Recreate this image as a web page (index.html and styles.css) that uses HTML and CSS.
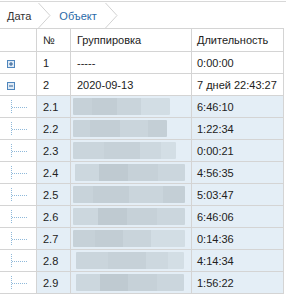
FILE: index.html
```html
<!DOCTYPE html>
<html>
<head>
<meta charset="utf-8">
<link rel="stylesheet" href="styles.css">
</head>
<body>
<div class="page">
  <div class="crumbs">
    <span class="crumb first">Дата</span>
    <svg class="chev" width="13" height="25" viewBox="0 0 13 25"><polyline points="0.5,0 12,12.5 0.5,25" fill="none" stroke="#d2d2d2" stroke-width="1"/></svg>
    <span class="crumb active">Объект</span>
    <svg class="chev" width="13" height="25" viewBox="0 0 13 25"><polyline points="0.5,0 12,12.5 0.5,25" fill="none" stroke="#d2d2d2" stroke-width="1"/></svg>
  </div>
  <div class="grid">
    <div class="row head">
      <div class="c c1"></div><div class="c c2">№</div><div class="c c3">Группировка</div><div class="c c4">Длительность</div>
    </div>
    <div class="row">
      <div class="c c1"><svg class="tog" width="8" height="8" viewBox="0 0 8 8"><rect x="0.5" y="0.5" width="7" height="7" fill="#dfeaf5" stroke="#4f86bd"/><path d="M2 4h4M4 2v4" stroke="#2d5f94" stroke-width="1"/></svg></div>
      <div class="c c2">1</div><div class="c c3">-----</div><div class="c c4">0:00:00</div>
    </div>
    <div class="row">
      <div class="c c1"><svg class="tog" width="8" height="8" viewBox="0 0 8 8"><rect x="0.5" y="0.5" width="7" height="7" fill="#dfeaf5" stroke="#4f86bd"/><path d="M2 4h4" stroke="#2d5f94" stroke-width="1"/></svg></div>
      <div class="c c2">2</div><div class="c c3">2020-09-13</div><div class="c c4">7 дней 22:43:27</div>
    </div>
    <div class="row child">
      <div class="c c1"><svg class="tree" width="30" height="21" viewBox="0 0 30 21"><path d="M11.5 4v13M12 11.5h16" stroke="#8fb9da" stroke-dasharray="1 1"/></svg></div>
      <div class="c c2">2.1</div><div class="c c3"><span class="blur w1 g1"></span></div><div class="c c4">6:46:10</div>
    </div>
    <div class="row child">
      <div class="c c1"><svg class="tree" width="30" height="21" viewBox="0 0 30 21"><path d="M11.5 4v13M12 11.5h16" stroke="#8fb9da" stroke-dasharray="1 1"/></svg></div>
      <div class="c c2">2.2</div><div class="c c3"><span class="blur w2 g2"></span></div><div class="c c4">1:22:34</div>
    </div>
    <div class="row child">
      <div class="c c1"><svg class="tree" width="30" height="21" viewBox="0 0 30 21"><path d="M11.5 4v13M12 11.5h16" stroke="#8fb9da" stroke-dasharray="1 1"/></svg></div>
      <div class="c c2">2.3</div><div class="c c3"><span class="blur w3 g3"></span></div><div class="c c4">0:00:21</div>
    </div>
    <div class="row child">
      <div class="c c1"><svg class="tree" width="30" height="21" viewBox="0 0 30 21"><path d="M11.5 4v13M12 11.5h16" stroke="#8fb9da" stroke-dasharray="1 1"/></svg></div>
      <div class="c c2">2.4</div><div class="c c3"><span class="blur w4 g4"></span></div><div class="c c4">4:56:35</div>
    </div>
    <div class="row child">
      <div class="c c1"><svg class="tree" width="30" height="21" viewBox="0 0 30 21"><path d="M11.5 4v13M12 11.5h16" stroke="#8fb9da" stroke-dasharray="1 1"/></svg></div>
      <div class="c c2">2.5</div><div class="c c3"><span class="blur w5 g2"></span></div><div class="c c4">5:03:47</div>
    </div>
    <div class="row child">
      <div class="c c1"><svg class="tree" width="30" height="21" viewBox="0 0 30 21"><path d="M11.5 4v13M12 11.5h16" stroke="#8fb9da" stroke-dasharray="1 1"/></svg></div>
      <div class="c c2">2.6</div><div class="c c3"><span class="blur w5 g4"></span></div><div class="c c4">6:46:06</div>
    </div>
    <div class="row child">
      <div class="c c1"><svg class="tree" width="30" height="21" viewBox="0 0 30 21"><path d="M11.5 4v13M12 11.5h16" stroke="#8fb9da" stroke-dasharray="1 1"/></svg></div>
      <div class="c c2">2.7</div><div class="c c3"><span class="blur w5 g1"></span></div><div class="c c4">0:14:36</div>
    </div>
    <div class="row child">
      <div class="c c1"><svg class="tree" width="30" height="21" viewBox="0 0 30 21"><path d="M11.5 4v13M12 11.5h16" stroke="#8fb9da" stroke-dasharray="1 1"/></svg></div>
      <div class="c c2">2.8</div><div class="c c3"><span class="blur w6 g3"></span></div><div class="c c4">4:14:34</div>
    </div>
    <div class="row child">
      <div class="c c1"><svg class="tree" width="30" height="21" viewBox="0 0 30 21"><path d="M11.5 4v13M12 11.5h16" stroke="#8fb9da" stroke-dasharray="1 1"/></svg></div>
      <div class="c c2">2.9</div><div class="c c3"><span class="blur w6 g4"></span></div><div class="c c4">1:56:22</div>
    </div>
  </div>
</div>
</body>
</html>
```

FILE: styles.css
```css
html, body {
  margin: 0;
  padding: 0;
  background: #ffffff;
}
body {
  font-family: "Liberation Sans", Arial, sans-serif;
  font-size: 11px;
  color: #222222;
}
.page {
  width: 286px;
  overflow: hidden;
}
.crumbs {
  margin-top: 1px;
  border-top: 1px solid #d8d8d8;
  height: 26px;
  display: flex;
  align-items: center;
}
.crumb {
  line-height: 26px;
  padding-top: 2px;
  color: #333333;
}
.crumb.first {
  padding-left: 7px;
  padding-right: 7px;
}
.crumb.active {
  color: #2a6aa8;
  padding-left: 8px;
  padding-right: 8px;
}
.chev {
  align-self: flex-end;
  display: block;
}
.grid {
  width: 284px;
  border-top: 1px solid #d4d4d4;
}
.row {
  display: grid;
  grid-template-columns: 37px 34px 121px 92px;
  height: 22px;
}
.row.head {
  height: 23px;
  background: #ffffff;
}
.c {
  box-sizing: border-box;
  border-right: 1px solid #d4d4d4;
  border-bottom: 1px solid #d4d4d4;
  padding-left: 6px;
  display: flex;
  align-items: center;
  white-space: nowrap;
  overflow: hidden;
}
.c1 {
  padding-left: 0;
}
.c4 {
  padding-left: 5px;
}
.child .c2,
.child .c3,
.child .c4 {
  background: #e4eef6;
}
.tog {
  display: block;
  margin-left: 7px;
  margin-top: 2px;
}
.tree {
  display: block;
}
.blur {
  display: block;
  height: 17px;
  margin-left: -4px;
  border-radius: 1px;
}
.w1 { width: 97px; }
.w2 { width: 94px; }
.w3 { width: 103px; }
.w4 { width: 110px; margin-left: -2px; }
.w5 { width: 112px; }
.w6 { width: 108px; margin-left: -1px; }
.g1 {
  background: linear-gradient(to right, #c6d1d8 0 20%, #c2cdd4 20% 45%, #c9d4db 45% 70%, #d2dde4 70% 100%);
}
.g2 {
  background: linear-gradient(to right, #c8d3da 0 18%, #c3ced5 18% 50%, #cad5dc 50% 80%, #c4cfd6 80% 100%);
}
.g3 {
  background: linear-gradient(to right, #cad5dc 0 30%, #c6d1d8 30% 65%, #cdd8df 65% 85%, #d3dee5 85% 100%);
}
.g4 {
  background: linear-gradient(to right, #ccd7de 0 22%, #bfcad1 22% 48%, #c6d1d8 48% 75%, #cbd6dd 75% 100%);
}
```
